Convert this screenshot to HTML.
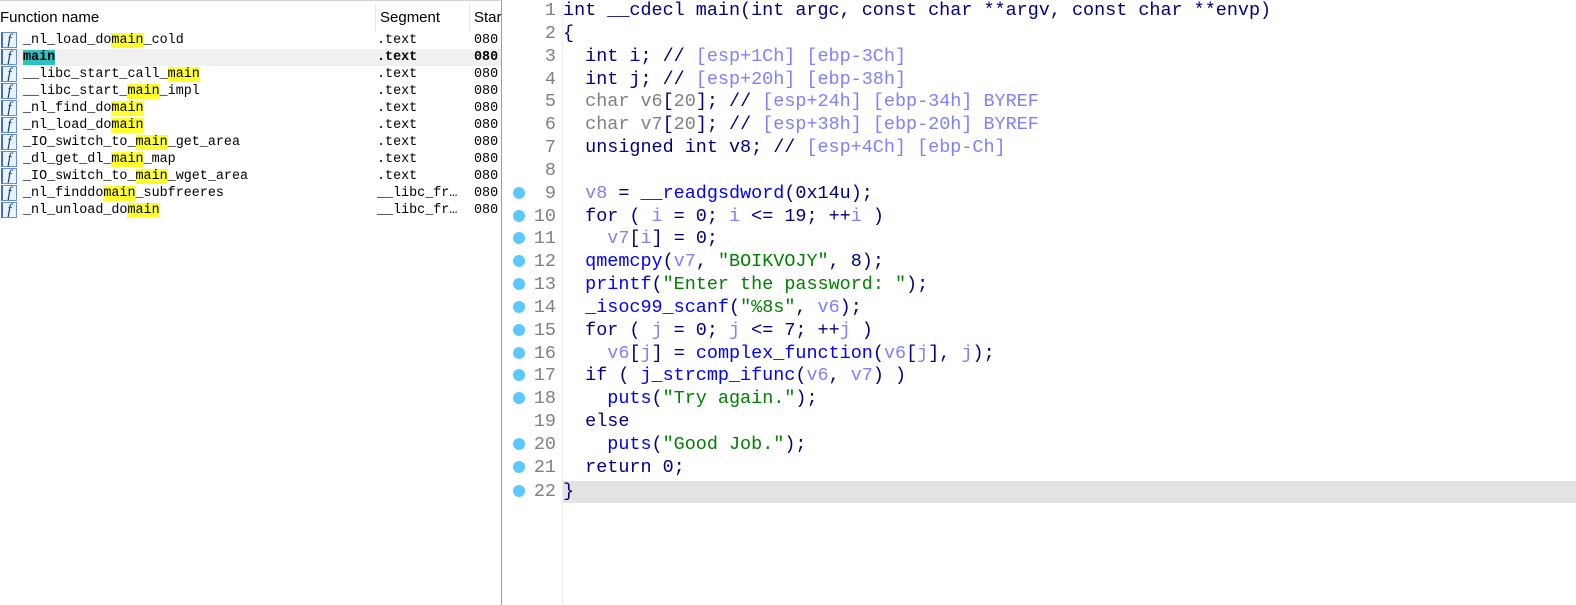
<!DOCTYPE html>
<html><head><meta charset="utf-8"><style>
*{margin:0;padding:0;box-sizing:border-box}
body{width:1576px;height:605px;background:#fff;position:relative;overflow:hidden;font-family:"Liberation Sans",sans-serif}
#left{position:absolute;left:0;top:0;width:502px;height:605px;border-top:1px solid #d0d0d0;border-right:1px solid #a0a0a0;overflow:hidden}
.hdr{position:absolute;top:0;height:31px;font-size:15px;line-height:34px;color:#000}
.sep{position:absolute;top:4px;width:1px;height:26px;background:#e5e5e5}
.row{position:absolute;left:0;width:501px;height:17px;font-family:"Liberation Mono",monospace;font-size:13.4px;line-height:17px;white-space:pre;color:#000}
.row .ic{position:absolute;left:1px;top:0;width:16px;height:16px;background:#e8f4fb;border:1px solid #6a8fc8;border-left:2px solid #3d6fc0;font-family:"Liberation Serif",serif;font-style:italic;font-size:15px;line-height:14px;text-align:center;color:#1a3a7a}
.row .n{position:absolute;left:23px}
.row .s{position:absolute;left:377px}
.row .a{position:absolute;left:474px}
.y{background:#ffff30}
#code{position:absolute;left:503px;top:0;right:0;height:605px}
#gsep{position:absolute;left:59px;top:0;width:1px;height:605px;background:#eee}
.l{position:absolute;left:0;right:0;height:23px;font-family:"Liberation Mono",monospace;font-size:18.45px;line-height:23px;white-space:pre;color:#000080}
.l .num{position:absolute;left:20px;width:33px;text-align:right;color:#808080}
.l .dot{position:absolute;left:10px;top:5px;width:12px;height:12px;border-radius:50%;background:#5cc8ff}
.l .c{position:absolute;left:60px}
.v{color:#8080ff}.f{color:#0000ff}.str{color:#008000}.g{color:#808080}.cm{color:#8080ff}
</style></head><body>
<div id="left">
<div class="hdr" style="left:0">Function name</div>
<div class="sep" style="left:375px"></div>
<div class="hdr" style="left:380px">Segment</div>
<div class="sep" style="left:469px"></div>
<div class="hdr" style="left:474px">Star</div>
<div class="row" style="top:31px"><span class="ic">f</span><span class="n">_nl_load_do<span class="y">main</span>_cold</span><span class="s">.text</span><span class="a">080</span></div>
<div class="row" style="top:48px;background:#f0f0f0;font-weight:bold"><span class="ic" style="font-weight:normal">f</span><span class="n"><span style="background:#30c0c0">main</span></span><span class="s">.text</span><span class="a">080</span></div>
<div class="row" style="top:65px"><span class="ic">f</span><span class="n">__libc_start_call_<span class="y">main</span></span><span class="s">.text</span><span class="a">080</span></div>
<div class="row" style="top:82px"><span class="ic">f</span><span class="n">__libc_start_<span class="y">main</span>_impl</span><span class="s">.text</span><span class="a">080</span></div>
<div class="row" style="top:99px"><span class="ic">f</span><span class="n">_nl_find_do<span class="y">main</span></span><span class="s">.text</span><span class="a">080</span></div>
<div class="row" style="top:116px"><span class="ic">f</span><span class="n">_nl_load_do<span class="y">main</span></span><span class="s">.text</span><span class="a">080</span></div>
<div class="row" style="top:133px"><span class="ic">f</span><span class="n">_IO_switch_to_<span class="y">main</span>_get_area</span><span class="s">.text</span><span class="a">080</span></div>
<div class="row" style="top:150px"><span class="ic">f</span><span class="n">_dl_get_dl_<span class="y">main</span>_map</span><span class="s">.text</span><span class="a">080</span></div>
<div class="row" style="top:167px"><span class="ic">f</span><span class="n">_IO_switch_to_<span class="y">main</span>_wget_area</span><span class="s">.text</span><span class="a">080</span></div>
<div class="row" style="top:184px"><span class="ic">f</span><span class="n">_nl_finddo<span class="y">main</span>_subfreeres</span><span class="s">__libc_fr…</span><span class="a">080</span></div>
<div class="row" style="top:201px"><span class="ic">f</span><span class="n">_nl_unload_do<span class="y">main</span></span><span class="s">__libc_fr…</span><span class="a">080</span></div>
</div>
<div id="code">
<div id="gsep"></div>
<div class="l" style="top:-1px"><span class="num">1</span><span class="c">int __cdecl main(int argc, const char **argv, const char **envp)</span></div>
<div class="l" style="top:22px"><span class="num">2</span><span class="c">{</span></div>
<div class="l" style="top:45px"><span class="num">3</span><span class="c">  int i; // <span class="cm">[esp+1Ch] [ebp-3Ch]</span></span></div>
<div class="l" style="top:68px"><span class="num">4</span><span class="c">  int j; // <span class="cm">[esp+20h] [ebp-38h]</span></span></div>
<div class="l" style="top:90px"><span class="num">5</span><span class="c">  <span class="g">char v6</span>[<span class="g">20</span>]; // <span class="cm">[esp+24h] [ebp-34h] BYREF</span></span></div>
<div class="l" style="top:113px"><span class="num">6</span><span class="c">  <span class="g">char v7</span>[<span class="g">20</span>]; // <span class="cm">[esp+38h] [ebp-20h] BYREF</span></span></div>
<div class="l" style="top:136px"><span class="num">7</span><span class="c">  unsigned int v8; // <span class="cm">[esp+4Ch] [ebp-Ch]</span></span></div>
<div class="l" style="top:159px"><span class="num">8</span></div>
<div class="l" style="top:182px"><span class="dot"></span><span class="num">9</span><span class="c">  <span class="v">v8</span> = <span class="f">__readgsdword</span>(0x14u);</span></div>
<div class="l" style="top:205px"><span class="dot"></span><span class="num">10</span><span class="c">  for ( <span class="v">i</span> = 0; <span class="v">i</span> &lt;= 19; ++<span class="v">i</span> )</span></div>
<div class="l" style="top:227px"><span class="dot"></span><span class="num">11</span><span class="c">    <span class="v">v7</span>[<span class="v">i</span>] = 0;</span></div>
<div class="l" style="top:250px"><span class="dot"></span><span class="num">12</span><span class="c">  <span class="f">qmemcpy</span>(<span class="v">v7</span>, <span class="str">"BOIKVOJY"</span>, 8);</span></div>
<div class="l" style="top:273px"><span class="dot"></span><span class="num">13</span><span class="c">  <span class="f">printf</span>(<span class="str">"Enter the password: "</span>);</span></div>
<div class="l" style="top:296px"><span class="dot"></span><span class="num">14</span><span class="c">  <span class="f">_isoc99_scanf</span>(<span class="str">"%8s"</span>, <span class="v">v6</span>);</span></div>
<div class="l" style="top:319px"><span class="dot"></span><span class="num">15</span><span class="c">  for ( <span class="v">j</span> = 0; <span class="v">j</span> &lt;= 7; ++<span class="v">j</span> )</span></div>
<div class="l" style="top:342px"><span class="dot"></span><span class="num">16</span><span class="c">    <span class="v">v6</span>[<span class="v">j</span>] = <span class="f">complex_function</span>(<span class="v">v6</span>[<span class="v">j</span>], <span class="v">j</span>);</span></div>
<div class="l" style="top:364px"><span class="dot"></span><span class="num">17</span><span class="c">  if ( <span class="f">j_strcmp_ifunc</span>(<span class="v">v6</span>, <span class="v">v7</span>) )</span></div>
<div class="l" style="top:387px"><span class="dot"></span><span class="num">18</span><span class="c">    <span class="f">puts</span>(<span class="str">"Try again."</span>);</span></div>
<div class="l" style="top:410px"><span class="num">19</span><span class="c">  else</span></div>
<div class="l" style="top:433px"><span class="dot"></span><span class="num">20</span><span class="c">    <span class="f">puts</span>(<span class="str">"Good Job."</span>);</span></div>
<div class="l" style="top:456px"><span class="dot"></span><span class="num">21</span><span class="c">  return 0;</span></div>
<div class="l" style="top:480px"><div style="position:absolute;left:60px;right:0;top:1px;height:22px;background:#e3e3e3"></div><span class="dot"></span><span class="num">22</span><span class="c">}</span></div>
</div>
</body></html>
